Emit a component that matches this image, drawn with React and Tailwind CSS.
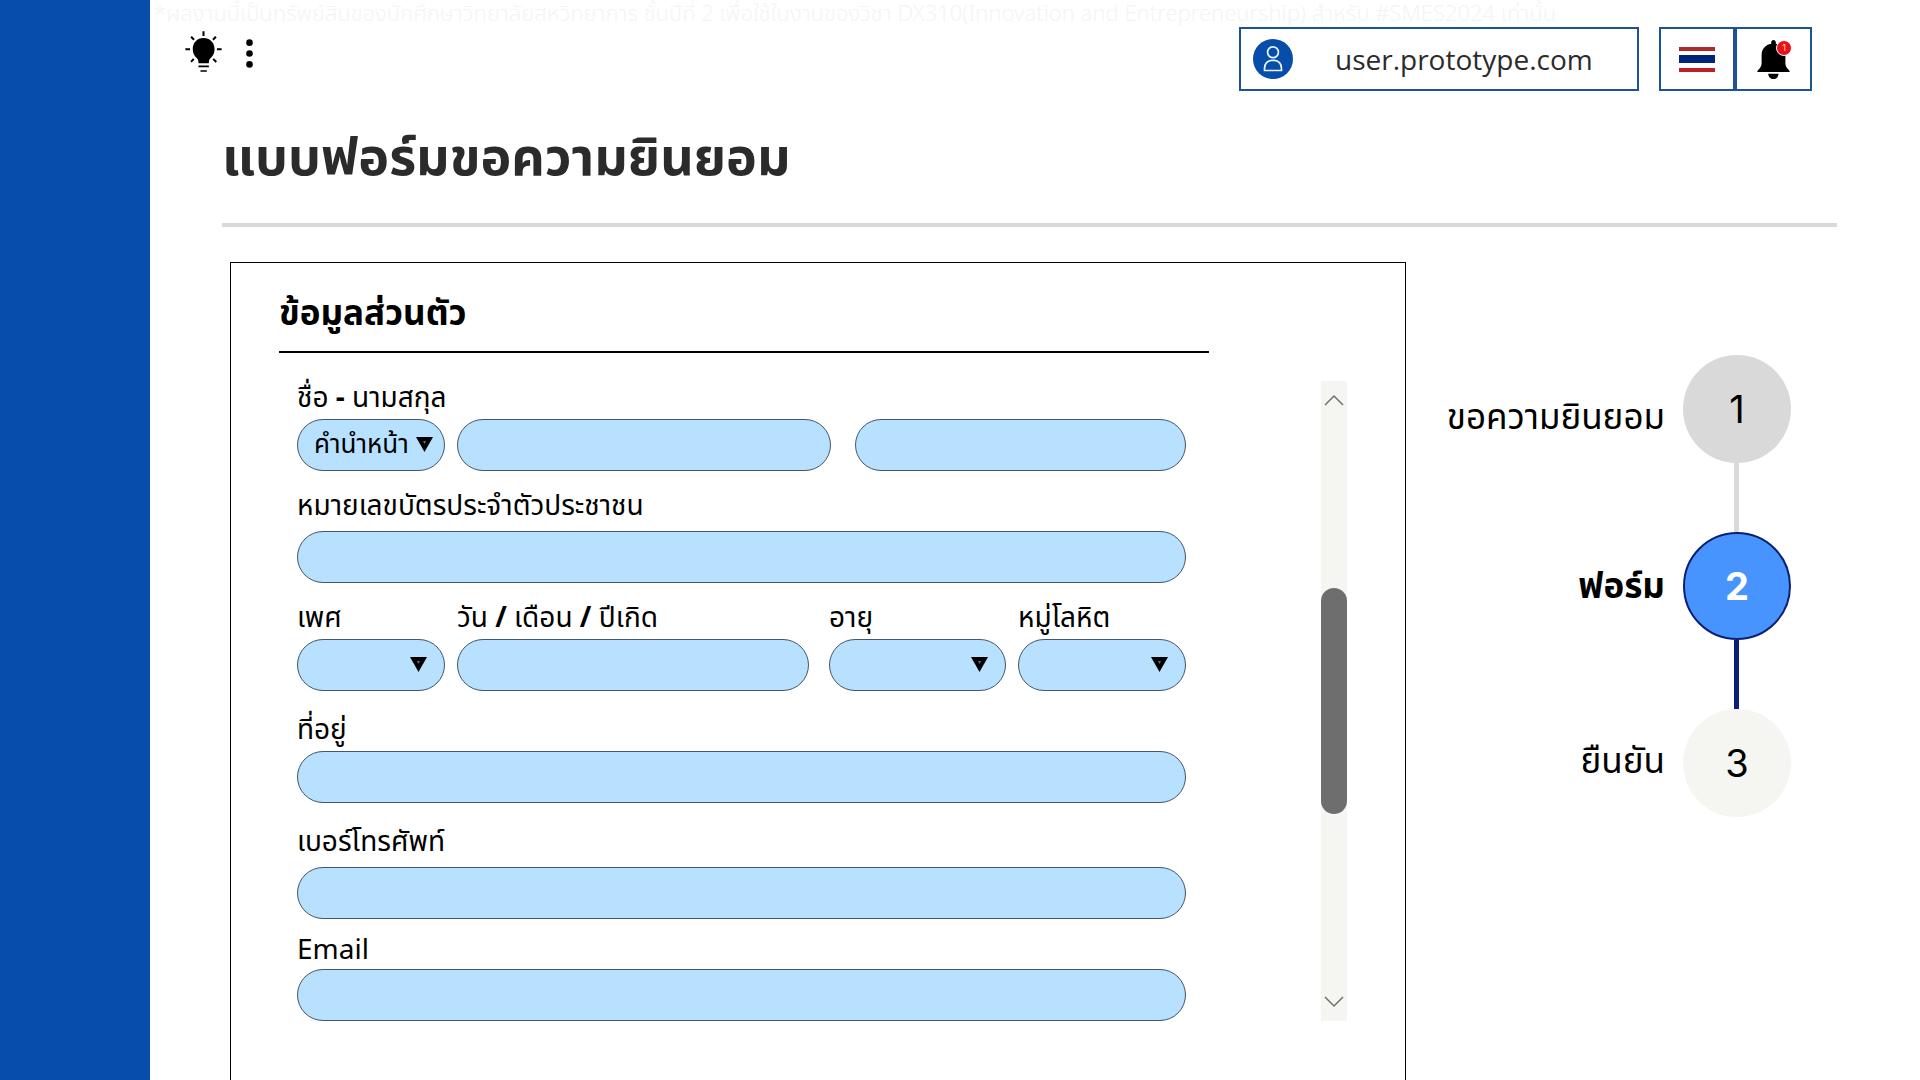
const THAI = "font-['Noto_Sans_Thai','Noto_Sans','Open_Sans',sans-serif]";

const fieldClass =
  "block h-[52px] w-full rounded-full border border-[#44566a] bg-[#b8e0ff] text-[26px] text-black outline-none";

function BulbIcon() {
  return (
    <svg viewBox="30 34 110 122" className="h-[41px] w-[37px]" aria-hidden="true">
      <g stroke="#000" strokeWidth="6" fill="none">
        <path d="M85 35v14M31 88.500h14M125 88.500h14M48 51l9 9M122 51l-9 9M48 126l8-9M123 126l-9-9" />
        <path d="M70 139.500h31M76 153h19" strokeWidth="5" />
      </g>
      <path d="M85 55c19 0 33 14 33 33 0 13-6 21-13 28-3 3-4 6-4 14H70c0-8-1-11-4-14-7-7-13-15-13-28 0-19 13-33 32-33z" />
    </svg>
  );
}

function DotsIcon() {
  return (
    <svg viewBox="0 0 20 88" className="h-[29px] w-[7px]" aria-hidden="true">
      <circle cx="10" cy="11" r="10" />
      <circle cx="10" cy="44" r="10" />
      <circle cx="10" cy="77" r="10" />
    </svg>
  );
}

function UserIcon() {
  return (
    <svg viewBox="0 0 118 118" className="size-10 shrink-0" aria-hidden="true">
      <circle cx="59" cy="59" r="59" fill="#074daa" />
      <g fill="none" stroke="#eaf6ff" strokeWidth="5">
        <circle cx="59" cy="39" r="16" />
        <path d="M34 93V86c0-13 9-23 21-23h8c12 0 21 10 21 23v7z" />
      </g>
    </svg>
  );
}

function FlagIcon() {
  return (
    <span className="flex h-[25px] w-9 flex-col justify-between" aria-hidden="true">
      <span className="h-1 bg-[#a92b2e]" />
      <span className="h-2 bg-[#00257a]" />
      <span className="h-1 bg-[#bb2026]" />
    </span>
  );
}

function BellIcon() {
  return (
    <svg viewBox="0 0 98 118" className="h-[39px] w-[33px]" aria-hidden="true">
      <path d="M49 0c4 0 7 3 7 7v4c17 3 29 16 29 34v26c0 8 4 13 9 18 3 3 4 5 4 8H0c0-3 1-5 4-8 5-5 9-10 9-18V45c0-18 12-31 29-34V7c0-4 3-7 7-7z" />
      <path d="M33 102h31c0 9-6 16-15 16s-16-7-16-16z" />
    </svg>
  );
}

function TextField({ id, label }) {
  return <input id={id} type="text" aria-label={label} className={`${fieldClass} px-5`} />;
}

function SelectField({ id, label, placeholder = "", tight = false }) {
  return (
    <div className="relative">
      <select
        id={id}
        aria-label={label}
        defaultValue=""
        className={`${fieldClass} cursor-pointer appearance-none ${tight ? "pr-7 pl-4" : "px-5"}`}
      >
        <option value="">{placeholder}</option>
      </select>
      <svg
        viewBox="0 0 17 15"
        className={`pointer-events-none absolute top-[18px] h-[15px] w-[17px] ${tight ? "right-3" : "right-[18px]"}`}
        aria-hidden="true"
      >
        <path d="M0 0h17L8.500 15z" />
        <path d="M7 4h3l-1.500 3z" fill="#5f7180" />
      </svg>
    </div>
  );
}

function Label({ htmlFor, children, className = "mb-1" }) {
  return (
    <label htmlFor={htmlFor} className={`block text-[28px] leading-8 whitespace-nowrap ${className}`}>
      {children}
    </label>
  );
}

function Scrollbar() {
  return (
    <div className="flex w-[26px] shrink-0 flex-col bg-[#f5f6f1]">
      <button type="button" aria-label="เลื่อนขึ้น" className="flex h-[38px] items-center justify-center">
        <svg viewBox="0 0 20 12" className="h-3 w-5" fill="none" stroke="#70706e" strokeWidth="1.500" aria-hidden="true">
          <path d="M1 11l9-9 9 9" />
        </svg>
      </button>
      <div className="flex-[170]" />
      <div
        role="scrollbar"
        aria-controls="personal-form"
        aria-orientation="vertical"
        aria-valuenow={50}
        className="flex-[227] rounded-full bg-[#6e6e6e]"
      />
      <div className="flex-[170]" />
      <button type="button" aria-label="เลื่อนลง" className="flex h-[38px] items-center justify-center">
        <svg viewBox="0 0 20 12" className="h-3 w-5" fill="none" stroke="#70706e" strokeWidth="1.500" aria-hidden="true">
          <path d="M1 1l9 9 9-9" />
        </svg>
      </button>
    </div>
  );
}

function Steps() {
  const circle = "flex size-[108px] shrink-0 items-center justify-center rounded-full font-['Inter',sans-serif] text-[38px]";
  return (
    <ol className="mt-[93px] w-[345px] shrink-0 text-[35px] whitespace-nowrap">
      <li>
        <div className="flex items-center justify-end gap-[18px]">
          <span className="pt-5">ขอความยินยอม</span>
          <span className={`${circle} bg-[#d9d9d9]`}>1</span>
        </div>
        <div className="mr-[52px] ml-auto h-[69px] w-[5px] bg-[#d9d9d9]" />
      </li>
      <li aria-current="step">
        <div className="flex items-center justify-end gap-[18px]">
          <span className="pt-1 font-bold">ฟอร์ม</span>
          <span className={`${circle} border-2 border-[#0a1f75] bg-[#4794ff] font-bold text-white`}>2</span>
        </div>
        <div className="mr-[52px] ml-auto h-[69px] w-[5px] bg-[#0a1f75]" />
      </li>
      <li className="flex items-center justify-end gap-[18px]">
        <span>ยืนยัน</span>
        <span className={`${circle} bg-[#f5f6f1]`}>3</span>
      </li>
    </ol>
  );
}

export default function App() {
  return (
    <div className={`flex min-h-screen bg-white text-black ${THAI}`}>
      <aside className="w-[150px] shrink-0 bg-[#074daa]" />

      <div className="flex min-w-0 flex-1 flex-col">
        <p className="h-[27px] pl-1 text-[22px] leading-[30px] font-light whitespace-nowrap text-[#f4f4f4]">
          *ผลงานนี้เป็นทรัพย์สินของนักศึกษาวิทยาลัยสหวิทยาการ ชั้นปีที่ 2 เพื่อใช้ในงานของวิชา DX310(Innovation and
          Entrepreneurship) สำหรับ #SMES2024 เท่านั้น
        </p>

        <header className="flex justify-between pr-[108px] pl-[35px]">
          <div className="flex gap-6 pt-1">
            <button type="button" aria-label="คำแนะนำ" className="self-start">
              <BulbIcon />
            </button>
            <button type="button" aria-label="เมนู" className="self-start pt-2">
              <DotsIcon />
            </button>
          </div>

          <div className="flex h-16">
            <button
              type="button"
              className="mr-5 flex w-[400px] items-center border-2 border-[#1e5296] pl-3 font-['Open_Sans',sans-serif] text-[28px] text-[#2b2b2b]"
            >
              <UserIcon />
              <span className="ml-[42px]">user.prototype.com</span>
            </button>
            <button
              type="button"
              aria-label="ภาษาไทย"
              className="flex w-[76px] items-center justify-center border-2 border-[#1e5296]"
            >
              <FlagIcon />
            </button>
            <button
              type="button"
              aria-label="การแจ้งเตือน"
              className="flex w-[77px] items-center justify-center border-2 border-[#1e5296]"
            >
              <span className="relative">
                <BellIcon />
                <span className="absolute top-0 -right-0.5 flex size-4 items-center justify-center rounded-full border border-white bg-[#e8101c] font-['Inter',sans-serif] text-[9px] leading-none text-[#ffe3a0]">
                  1
                </span>
              </span>
            </button>
          </div>
        </header>

        <h1 className="mr-[83px] ml-[72px] border-b-4 border-[#d9d9d9] pt-7 pb-6 text-[52px] leading-[80px] font-bold text-[#2b2b2b]">
          แบบฟอร์มขอความยินยอม
        </h1>

        <main className="flex flex-1 gap-10 pt-[35px] pr-[129px] pl-20">
          <section className="min-w-0 flex-1 border border-b-0 border-black pr-[58px] pb-[56px] pl-12">
            <h2 className="mr-[138px] border-b-2 border-black pt-7 pb-3 text-[35px] leading-[48px] font-bold">
              ข้อมูลส่วนตัว
            </h2>

            <div className="mt-7 flex">
              <form id="personal-form" className="mr-[135px] ml-[18px] min-w-0 flex-1 pt-0.5">
                <Label htmlFor="prefix">
                  ชื่อ <b>-</b> นามสกุล
                </Label>
                <div className="flex">
                  <div className="flex-[148]">
                    <SelectField id="prefix" label="คำนำหน้า" placeholder="คำนำหน้า" tight />
                  </div>
                  <div className="ml-3 flex-[373]">
                    <TextField id="first-name" label="ชื่อ" />
                  </div>
                  <div className="ml-6 flex-[331]">
                    <TextField id="last-name" label="นามสกุล" />
                  </div>
                </div>

                <Label htmlFor="citizen-id" className="mt-5 mb-2">
                  หมายเลขบัตรประจำตัวประชาชน
                </Label>
                <TextField id="citizen-id" />

                <div className="mt-5 flex">
                  <div className="min-w-0 flex-[148]">
                    <Label htmlFor="sex">เพศ</Label>
                    <SelectField id="sex" />
                  </div>
                  <div className="ml-3 min-w-0 flex-[352]">
                    <Label htmlFor="birth">
                      วัน <b>/</b> เดือน <b>/</b> ปีเกิด
                    </Label>
                    <TextField id="birth" />
                  </div>
                  <div className="ml-5 min-w-0 flex-[177]">
                    <Label htmlFor="age">อายุ</Label>
                    <SelectField id="age" />
                  </div>
                  <div className="ml-3 min-w-0 flex-[168]">
                    <Label htmlFor="blood">หมู่โลหิต</Label>
                    <SelectField id="blood" />
                  </div>
                </div>

                <Label htmlFor="address" className="mt-6 mb-1">
                  ที่อยู่
                </Label>
                <TextField id="address" />

                <Label htmlFor="phone" className="mt-6 mb-2">
                  เบอร์โทรศัพท์
                </Label>
                <TextField id="phone" />

                <Label htmlFor="email" className="mt-4 mb-0.5">
                  Email
                </Label>
                <TextField id="email" />
              </form>

              <Scrollbar />
            </div>
          </section>

          <Steps />
        </main>
      </div>
    </div>
  );
}
